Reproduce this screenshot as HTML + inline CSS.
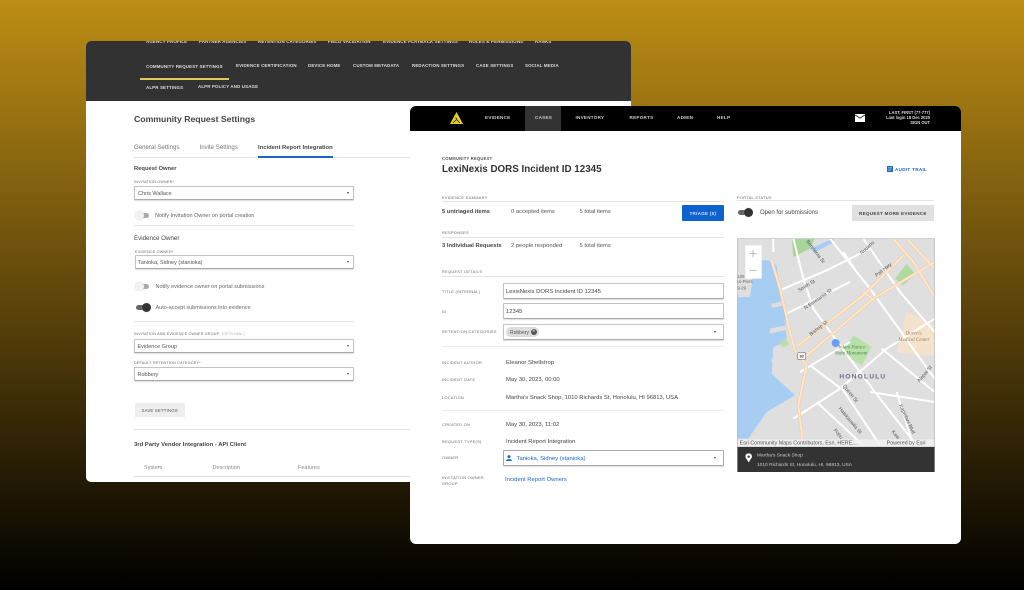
<!DOCTYPE html>
<html><head><meta charset="utf-8"><style>
html,body{margin:0;padding:0;width:1024px;height:590px;overflow:hidden}
body{position:relative;background:linear-gradient(#bd8d15,#5f460b 50%,#000);font-family:"Liberation Sans",sans-serif;color:#444}
#w{position:absolute;left:0;top:0;width:1024px;height:590px;filter:blur(.3px)}
.p{position:absolute}
.t{position:absolute;white-space:nowrap;line-height:10px;height:10px;margin-top:.7px}
.n{font-size:4.4px;font-weight:700;letter-spacing:.16px;color:#ddd}
.h{font-size:6.1px;color:#555}
.h2{font-size:5.5px;color:#555}
.l{font-size:3.7px;letter-spacing:.2px;color:#666}
.r{position:absolute;height:1px;background:#e4e4e4}
.s{position:absolute;box-sizing:border-box;background:#fff;border:1px solid #c4c4c4;border-bottom-color:#aaa;box-shadow:0 1px 1px #ddd;border-radius:1px}
.a{position:absolute;width:0;height:0;border-left:1.6px solid transparent;border-right:1.6px solid transparent;border-top:2px solid #444}
.tg{position:absolute;width:13px;height:5px;border-radius:3px;background:#aaa}
.tg i{position:absolute;left:-1px;top:-2px;width:9px;height:9px;border-radius:50%;background:#f2f2f2;box-shadow:0 0 1px #bbb}
.tg.o{background:#666}.tg.o i{left:6px;background:#333}
.m{font-size:4.6px;font-weight:700;letter-spacing:.25px;color:#ccc}
.f{font-size:3.9px;letter-spacing:.3px;color:#666}
.v{font-size:5.9px;color:#444}
</style></head><body><div id="w">

<div class="p" style="left:86px;top:41px;width:545px;height:441px;overflow:hidden;border-radius:5px;background:#fff">
 <div class="p" style="left:0;top:0;width:545px;height:60px;background:#323232"></div>
 <div class="t n" style="left:60px;top:-5px">AGENCY PROFILE</div>
 <div class="t n" style="left:113px;top:-5px">PARTNER AGENCIES</div>
 <div class="t n" style="left:172px;top:-5px">RETENTION CATEGORIES</div>
 <div class="t n" style="left:242px;top:-5px">FIELD VALIDATION</div>
 <div class="t n" style="left:297px;top:-5px">EVIDENCE PLAYBACK SETTINGS</div>
 <div class="t n" style="left:383px;top:-5px">ROLES &amp; PERMISSIONS</div>
 <div class="t n" style="left:449px;top:-5px">RANKS</div>
 <div class="t n" style="left:60px;top:20.500px">COMMUNITY REQUEST SETTINGS</div>
 <div class="t n" style="left:150px;top:19.500px">EVIDENCE CERTIFICATION</div>
 <div class="t n" style="left:222px;top:19.500px">DEVICE HOME</div>
 <div class="t n" style="left:267px;top:19.500px">CUSTOM METADATA</div>
 <div class="t n" style="left:326px;top:19.500px">REDACTION SETTINGS</div>
 <div class="t n" style="left:390px;top:19.500px">CASE SETTINGS</div>
 <div class="t n" style="left:439px;top:19.500px">SOCIAL MEDIA</div>
 <div class="p" style="left:54px;top:37px;width:89px;height:2px;background:#e3c85a"></div>
 <div class="t n" style="left:60px;top:41.500px">ALPR SETTINGS</div>
 <div class="t n" style="left:112px;top:40.500px">ALPR POLICY AND USAGE</div>

 <div class="t" style="left:48px;top:72px;font-size:8.700px;font-weight:700;color:#444">Community Request Settings</div>
 <div class="t h" style="left:48px;top:101.500px;color:#777">General Settings</div>
 <div class="t h" style="left:113.500px;top:101.500px;color:#777">Invite Settings</div>
 <div class="t" style="left:172px;top:101.500px;font-size:5.850px;font-weight:700;color:#444">Incident Report Integration</div>
 <div class="r" style="left:48px;top:116px;width:277px"></div>
 <div class="p" style="left:172px;top:115px;width:75px;height:1.500px;background:#1a66c8"></div>

 <div class="t" style="left:48px;top:122px;font-size:5.800px;font-weight:700;color:#444">Request Owner</div>
 <div class="t l" style="left:48px;top:135px">INVITATION OWNER*</div>
 <div class="s" style="left:48px;top:145px;width:220px;height:14px"></div>
 <div class="t h2" style="left:52px;top:147px">Chris Wallace</div>
 <div class="a" style="left:261px;top:151px"></div>
 <div class="tg" style="left:50px;top:171.500px"><i></i></div>
 <div class="t" style="left:69px;top:169px;font-size:5.500px;color:#666">Notify Invitation Owner on portal creation</div>
 <div class="r" style="left:48px;top:184px;width:220px"></div>

 <div class="t" style="left:48px;top:192.500px;font-size:6.200px;color:#444">Evidence Owner</div>
 <div class="t l" style="left:49px;top:205px">EVIDENCE OWNER*</div>
 <div class="s" style="left:49px;top:214px;width:219px;height:14px"></div>
 <div class="t h2" style="left:52px;top:216px">Tanioka, Sidney (stanioka)</div>
 <div class="a" style="left:261px;top:220px"></div>
 <div class="tg" style="left:50px;top:242.500px"><i></i></div>
 <div class="t" style="left:69.500px;top:240px;font-size:5.500px;color:#666">Notify evidence owner on portal submissions</div>
 <div class="tg o" style="left:50px;top:263.500px"><i></i></div>
 <div class="t" style="left:69.500px;top:261px;font-size:5.500px;color:#666">Auto-accept submissions into evidence</div>
 <div class="r" style="left:48px;top:280px;width:220px"></div>

 <div class="t l" style="left:48px;top:287px">INVITATION AND EVIDENCE OWNER GROUP &nbsp;<span style="color:#aaa">(OPTIONAL)</span></div>
 <div class="s" style="left:48px;top:298px;width:220px;height:14px"></div>
 <div class="t h2" style="left:51.500px;top:300px">Evidence Group</div>
 <div class="a" style="left:261px;top:304px"></div>
 <div class="t l" style="left:48px;top:316px">DEFAULT RETENTION CATEGORY*</div>
 <div class="s" style="left:48px;top:326px;width:220px;height:13.500px"></div>
 <div class="t h2" style="left:51.500px;top:328px">Robbery</div>
 <div class="a" style="left:261px;top:332px"></div>

 <div class="p" style="left:49px;top:362px;width:49.500px;height:14px;background:#eee"></div>
 <div class="t" style="left:55.500px;top:364px;font-size:4.300px;letter-spacing:.2px;color:#555">SAVE SETTINGS</div>
 <div class="r" style="left:48px;top:388px;width:277px"></div>
 <div class="t" style="left:48px;top:398px;font-size:5.900px;font-weight:700;color:#444">3rd Party Vendor Integration - API Client</div>
 <div class="t" style="left:58px;top:421.500px;font-size:5.500px;color:#888">System</div>
 <div class="t" style="left:126.500px;top:421.500px;font-size:5.500px;color:#888">Description</div>
 <div class="t" style="left:212px;top:421.500px;font-size:5.500px;color:#888">Features</div>
 <div class="r" style="left:48px;top:435px;width:277px;background:#ddd"></div>
</div>

<div class="p" style="left:410px;top:106px;width:551px;height:438px;background:#fff;border-radius:6px;overflow:hidden">
 <div class="p" style="left:0;top:0;width:551px;height:24.500px;background:#000"></div>
 <div class="p" style="left:115px;top:0;width:36px;height:24.500px;background:#333"></div>
 <svg class="p" style="left:39px;top:5px" width="15" height="14" viewBox="0 0 15 14"><path d="M7.500 1 L14 13 H1 Z" fill="#e8d21f"/><path d="M4 12 L8 8 L6.500 6.500 M11 12 L8 9" stroke="#222" stroke-width=".8" fill="none"/></svg>
 <div class="t m" style="left:75px;top:6.500px">EVIDENCE</div>
 <div class="t m" style="left:125px;top:6.500px">CASES</div>
 <div class="t m" style="left:165.500px;top:6.500px">INVENTORY</div>
 <div class="t m" style="left:219.500px;top:6.500px">REPORTS</div>
 <div class="t m" style="left:267px;top:6.500px">ADMIN</div>
 <div class="t m" style="left:307px;top:6.500px">HELP</div>
 <svg class="p" style="left:445px;top:8px" width="10" height="8" viewBox="0 0 10 8"><rect width="10" height="8" fill="#fff"/><path d="M0 .8 L5 4.200 L10 .8" fill="none" stroke="#000" stroke-width=".8"/></svg>
 <div class="t" style="right:31px;top:1px;font-size:4.100px;font-weight:700;color:#ddd;text-align:right">LAST, FIRST (77-777)</div>
 <div class="t" style="right:31px;top:6px;font-size:4.100px;font-weight:700;color:#ddd;text-align:right">Last login 18 Dec 2020</div>
 <div class="t" style="right:31px;top:11px;font-size:4.100px;font-weight:700;color:#ddd;text-align:right">SIGN OUT</div>

 <div class="t" style="left:32px;top:47.500px;font-size:4.100px;font-weight:700;letter-spacing:.25px;color:#555">COMMUNITY REQUEST</div>
 <div class="t" style="left:32px;top:58.500px;font-size:9.800px;font-weight:700;color:#333">LexiNexis DORS Incident ID 12345</div>
 <svg class="p" style="left:477px;top:60px" width="6" height="6" viewBox="0 0 6 6"><rect width="6" height="6" rx=".6" fill="#1a66c8"/><path d="M1 1.700h4M1 3h4M1 4.300h3" stroke="#cfe0f7" stroke-width=".5"/></svg>
 <div class="t" style="left:485px;top:58.500px;font-size:4.600px;font-weight:700;letter-spacing:.3px;color:#1a66c8">AUDIT TRAIL</div>

 <div class="t f" style="left:32px;top:86px">EVIDENCE SUMMARY</div>
 <div class="r" style="left:32px;top:95px;width:282px"></div>
 <div class="t" style="left:32px;top:100px;font-weight:700;font-size:5.800px">5 untriaged items</div>
 <div class="t" style="left:101px;top:100px;color:#555;font-size:5.800px">0 accepted items</div>
 <div class="t" style="left:169.500px;top:100px;color:#555;font-size:5.800px">5 total items</div>
 <div class="p" style="left:272px;top:99px;width:42px;height:15.500px;background:#0d62cf;border-radius:1px"></div>
 <div class="t" style="left:279.500px;top:102px;font-size:4.600px;letter-spacing:.25px;color:#cfe0f7;font-weight:700">TRIAGE (5)</div>
 <div class="t f" style="left:32px;top:121.500px">RESPONSES</div>
 <div class="r" style="left:32px;top:131px;width:282px"></div>
 <div class="t" style="left:32px;top:134.500px;font-weight:700;font-size:5.800px">3 Individual Requests</div>
 <div class="t" style="left:101px;top:134.500px;color:#555;font-size:5.800px">2 people responded</div>
 <div class="t" style="left:169.500px;top:134.500px;color:#555;font-size:5.800px">5 total items</div>

 <div class="t f" style="left:32px;top:160.500px">REQUEST DETAILS</div>
 <div class="r" style="left:32px;top:170px;width:282px"></div>
 <div class="t f" style="left:32px;top:180px">TITLE (INTERNAL)</div>
 <div class="s" style="left:93px;top:177px;width:221px;height:16px"></div>
 <div class="t v" style="left:96px;top:180px">LexisNexis DORS Incident ID 12345</div>
 <div class="t f" style="left:32px;top:200px">ID</div>
 <div class="s" style="left:93px;top:197px;width:221px;height:15.500px"></div>
 <div class="t v" style="left:96px;top:200px">12345</div>
 <div class="t f" style="left:32px;top:220px">RETENTION CATEGORIES</div>
 <div class="s" style="left:93px;top:218px;width:221px;height:15.500px"></div>
 <div class="p" style="left:96px;top:220.500px;width:33px;height:10.500px;background:#ddd;border-radius:6px"></div>
 <div class="t" style="left:100px;top:221px;font-size:5px;color:#555">Robbery</div>
 <div class="p" style="left:120.500px;top:222.500px;width:6.500px;height:6.500px;border-radius:50%;background:#555;color:#ddd;font-size:6px;line-height:6.500px;text-align:center">×</div>
 <div class="a" style="left:304px;top:225px"></div>
 <div class="r" style="left:32px;top:240px;width:282px;background:#eee"></div>

 <div class="t f" style="left:32px;top:251px">INCIDENT AUTHOR</div>
 <div class="t v" style="left:96px;top:251px">Eleanor Shellstrop</div>
 <div class="t f" style="left:32px;top:268.500px">INCIDENT DATE</div>
 <div class="t v" style="left:96px;top:268px">May 30, 2023, 00:00</div>
 <div class="t f" style="left:32px;top:286px">LOCATION</div>
 <div class="t v" style="left:96px;top:286px;font-size:5.850px">Martha's Snack Shop, 1010 Richards St, Honolulu, HI 96813, USA</div>
 <div class="r" style="left:32px;top:304px;width:282px;background:#eee"></div>
 <div class="t f" style="left:32px;top:313px">CREATED ON</div>
 <div class="t v" style="left:96px;top:313px">May 30, 2023, 11:02</div>
 <div class="t f" style="left:32px;top:330.500px">REQUEST TYPE(S)</div>
 <div class="t v" style="left:96px;top:330px">Incident Report Integration</div>
 <div class="t f" style="left:32px;top:346px">OWNER</div>
 <div class="s" style="left:93px;top:344px;width:221px;height:15.500px;border-color:#aaa"></div>
 <svg class="p" style="left:96px;top:348.500px" width="6" height="6" viewBox="0 0 6 6"><circle cx="3" cy="1.600" r="1.500" fill="#1a66c8"/><path d="M0 6 C0 3.500 6 3.500 6 6Z" fill="#1a66c8"/></svg>
 <div class="t v" style="left:106.500px;top:347px;color:#1a66c8">Tanioka, Sidney (stanioka)</div>
 <div class="a" style="left:304px;top:351px"></div>
 <div class="t f" style="left:32px;top:366.500px">INVITATION OWNER</div>
 <div class="t f" style="left:32px;top:372px">GROUP</div>
 <div class="t v" style="left:95px;top:368px;color:#1a66c8">Incident Report Owners</div>

 <div class="t f" style="left:327px;top:86px">PORTAL STATUS</div>
 <div class="r" style="left:327px;top:94px;width:197px"></div>
 <div class="tg o" style="left:328px;top:104px;background:#666"><i></i></div>
 <div class="t" style="left:350px;top:101.500px;font-size:6px;color:#444">Open for submissions</div>
 <div class="p" style="left:442px;top:99px;width:82px;height:16px;background:#e0e0e0"></div>
 <div class="t" style="left:449px;top:102px;font-size:4.550px;font-weight:700;letter-spacing:.3px;color:#444">REQUEST MORE EVIDENCE</div>
</div>

<svg class="p" style="left:730px;top:232px" width="210" height="245" viewBox="0 0 630 735">
 <defs><clipPath id="c"><rect x="22" y="20" width="592" height="625"/></clipPath></defs>
 <g clip-path="url(#c)">
  <rect x="22" y="20" width="592" height="625" fill="#dfdfdf"/>
  <path d="M22 195 H60 L75 85 H115 L140 100 L150 180 L165 245 L170 330 L130 345 L125 425 L195 490 L110 540 L55 620 H22Z" fill="#a8cdf2"/>
  <path d="M125 215l40 -8v14l-40 6zM120 290l48 -10v14l-48 10zM125 380l50 -12v12l-50 12z" fill="#dfdfdf"/>
  <path d="M185 20 H255 L240 50 L190 75Z" fill="#a8d59a"/>
  <path d="M240 50 L310 20 V32 L255 60Z" fill="#a8cdf2"/>
  <path d="M495 140 L530 95 L555 125 L520 160Z" fill="#b0dba0"/>
  <path d="M350 340 L370 310 L425 345 L395 400 L330 360Z" fill="#b8e0a8"/>
  <path d="M148 330l20 -10 10 18-20 8z" fill="#b8e0a8"/>
  <path d="M500 360 L530 240 L614 280 V370 L560 370Z" fill="#f3e3cd"/>
  <g fill="none" stroke="#fff" stroke-width="6">
   <path d="M190 20 L220 140 L250 230 L330 340 L450 500 L560 640"/>
   <path d="M150 175 L290 115 L420 50"/>
   <path d="M170 245 L360 150"/>
   <path d="M300 20 L420 170 L614 440"/>
   <path d="M400 20 L510 180 L614 300"/>
   <path d="M190 560 L330 470 L470 350 L614 260"/>
   <path d="M240 400 L340 475 L450 640"/>
   <path d="M420 480 L614 510"/>
   <path d="M260 510 L400 640"/>
   <path d="M130 60 L130 20M380 120 L340 60"/>
   <path d="M210 420 L360 330"/>
   <path d="M455 350 L614 480"/>
   <path d="M500 480 L550 640"/>
  </g>
  <g fill="none" stroke="#f0c79a" stroke-width="9">
   <path d="M125 85 L150 170 L180 300 L195 355 L230 400 L205 520 L220 645"/>
   <path d="M205 340 L400 190 L520 70"/>
   <path d="M225 375 L430 200 L614 90"/>
   <path d="M490 20 L550 90 L614 195"/>
   <path d="M530 20 L614 110"/>
   <path d="M400 180 L432 205"/>
  </g>
  <g fill="none" stroke="#fde6cb" stroke-width="6">
   <path d="M125 85 L150 170 L180 300 L195 355 L230 400 L205 520 L220 645"/>
   <path d="M205 340 L400 190 L520 70"/>
   <path d="M225 375 L430 200 L614 90"/>
   <path d="M490 20 L550 90 L614 195"/>
   <path d="M530 20 L614 110"/>
   <path d="M400 180 L432 205"/>
  </g>
  <rect x="203" y="362" width="24" height="20" rx="3" fill="#fff" stroke="#777" stroke-width="2"/>
  <text x="215" y="377" font-size="12" font-weight="700" fill="#333" text-anchor="middle" font-family="Liberation Sans">92</text>
  <rect x="46" y="40" width="49" height="100" fill="#fff"/>
  <path d="M58 65h22M69 54v22M58 115h22" stroke="#999" stroke-width="2"/>
  <circle cx="317" cy="333" r="12" fill="#6a9cf0"/>
  <g font-family="Liberation Sans" fill="#555" font-size="15">
   <text transform="translate(228,28) rotate(53)">Beretania St</text>
   <text transform="translate(395,68) rotate(-42)">Nuuanu</text>
   <text transform="translate(208,180) rotate(-32)">Smith St</text>
   <text transform="translate(226,233) rotate(-35)">N Beretania St</text>
   <text transform="translate(243,312) rotate(-38)">Bishop St</text>
   <text transform="translate(440,135) rotate(-38)">Pali Hwy</text>
   <text transform="translate(338,462) rotate(52)">Queen St</text>
   <text transform="translate(325,530) rotate(50)">Halekauwila St</text>
   <text transform="translate(310,595) rotate(50)">Pohu</text>
   <text transform="translate(507,520) rotate(65)">Kapiolani Blvd</text>
   <text transform="translate(484,600) rotate(50)">Kaw</text>
   <text transform="translate(568,452) rotate(-50)">Alapai St</text>
  </g>
  <text x="22" y="138" font-size="13" fill="#666" font-family="Liberation Sans">105</text>
  <text x="22" y="153" font-size="13" fill="#666" font-family="Liberation Sans">ur-Piers</text>
  <text x="22" y="172" font-size="13" fill="#666" font-family="Liberation Sans">9-29</text>
  <text font-family="Liberation Serif" font-style="italic" font-size="15" fill="#4a8a4a"><tspan x="325" y="350">Iolani Palace</tspan><tspan x="315" y="368">State Monument</tspan></text>
  <text font-family="Liberation Serif" font-style="italic" font-size="15" fill="#a07a50"><tspan x="527" y="308">Queen's</tspan><tspan x="505" y="327">Medical Center</tspan></text>
  <text x="328" y="440" font-family="Liberation Sans" font-size="20" font-weight="700" letter-spacing="3.500" fill="#6e6a8a">HONOLULU</text>
  <rect x="22" y="622" width="592" height="23" fill="#f1f1f1" opacity=".85"/>
  <text x="29" y="638" font-family="Liberation Sans" font-size="16" fill="#555">Esri Community Maps Contributors, Esri, HERE,...</text>
  <text x="470" y="638" font-family="Liberation Sans" font-size="16" fill="#555">Powered by Esri</text>
 </g>
 <rect x="22" y="20" width="592" height="625" fill="none" stroke="#bbb" stroke-width="2"/>
 <rect x="22" y="645" width="592" height="75" fill="#333"/>
 <path d="M56 664 C47 664 45 672 47 677 L56 691 L65 677 C67 672 65 664 56 664Z" fill="#fff"/><circle cx="56" cy="674" r="3.500" fill="#333"/>
 <text x="81" y="674" font-family="Liberation Sans" font-size="14.500" fill="#ccc">Martha's Snack Shop</text>
 <text x="81" y="702" font-family="Liberation Sans" font-size="14.500" fill="#ccc">1010 Richards St, Honolulu, HI, 96813, USA</text>
</svg>
</div></body></html>
